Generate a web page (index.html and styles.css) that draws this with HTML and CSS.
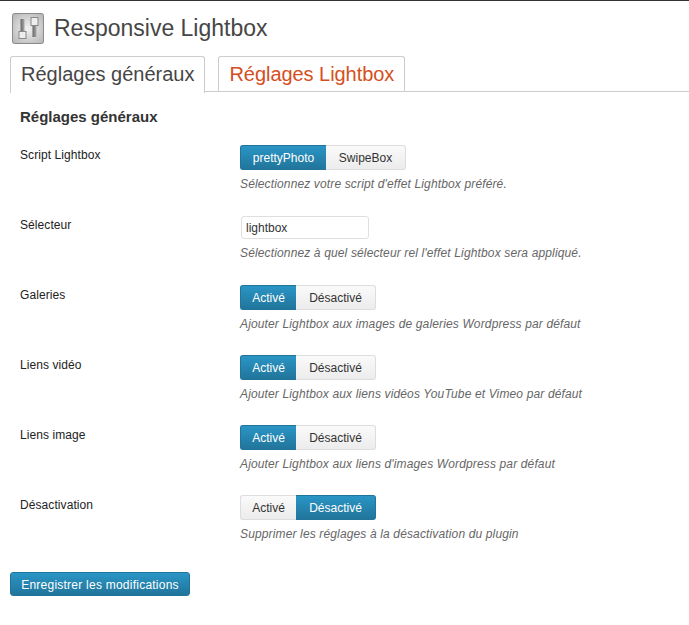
FILE: index.html
```html
<!DOCTYPE html>
<html lang="fr">
<head>
  <meta charset="UTF-8">
  <title>Responsive Lightbox</title>
  <link rel="stylesheet" href="styles.css">
</head>
<body>
  <div class="wrap">
    <div class="page-title">
      <svg class="page-icon" width="32" height="32" viewBox="0 0 32 32">
        <defs>
          <radialGradient id="iconBg" cx="50%" cy="50%" r="65%">
            <stop offset="0" stop-color="#f2f2f2"/>
            <stop offset="1" stop-color="#b8b8b8"/>
          </radialGradient>
          <linearGradient id="iconBar" x1="0" x2="1" y1="0" y2="0">
            <stop offset="0" stop-color="#666"/>
            <stop offset="1" stop-color="#aaa"/>
          </linearGradient>
        </defs>
        <rect x="0.5" y="0.5" width="31" height="30" rx="2" fill="url(#iconBg)" stroke="#8a8a8a"/>
        <rect x="8.5" y="6" width="4" height="18" fill="url(#iconBar)"/>
        <rect x="7" y="18.5" width="7" height="7" fill="#eee" stroke="#888"/>
        <rect x="20.5" y="6" width="4" height="18" fill="url(#iconBar)"/>
        <rect x="19" y="4.5" width="7" height="8" fill="#eee" stroke="#888"/>
      </svg>
      <h2>Responsive Lightbox</h2>
    </div>

    <div class="tabs">
      <a class="tab active">Réglages généraux</a>
      <a class="tab">Réglages Lightbox</a>
    </div>

    <h3>Réglages généraux</h3>

    <div class="row">
      <div class="label">Script Lightbox</div>
      <div class="field">
        <div class="switch">
          <span class="opt long on">prettyPhoto</span><span class="opt">SwipeBox</span>
        </div>
        <p class="desc">Sélectionnez votre script d'effet Lightbox préféré.</p>
      </div>
    </div>

    <div class="row">
      <div class="label">Sélecteur</div>
      <div class="field">
        <input class="text" type="text" value="lightbox">
        <p class="desc">Sélectionnez à quel sélecteur rel l'effet Lightbox sera appliqué.</p>
      </div>
    </div>

    <div class="row">
      <div class="label">Galeries</div>
      <div class="field">
        <div class="switch">
          <span class="opt on">Activé</span><span class="opt">Désactivé</span>
        </div>
        <p class="desc">Ajouter Lightbox aux images de galeries Wordpress par défaut</p>
      </div>
    </div>

    <div class="row">
      <div class="label">Liens vidéo</div>
      <div class="field">
        <div class="switch">
          <span class="opt on">Activé</span><span class="opt">Désactivé</span>
        </div>
        <p class="desc">Ajouter Lightbox aux liens vidéos YouTube et Vimeo par défaut</p>
      </div>
    </div>

    <div class="row">
      <div class="label">Liens image</div>
      <div class="field">
        <div class="switch">
          <span class="opt on">Activé</span><span class="opt">Désactivé</span>
        </div>
        <p class="desc">Ajouter Lightbox aux liens d'images Wordpress par défaut</p>
      </div>
    </div>

    <div class="row">
      <div class="label">Désactivation</div>
      <div class="field">
        <div class="switch">
          <span class="opt">Activé</span><span class="opt on">Désactivé</span>
        </div>
        <p class="desc">Supprimer les réglages à la désactivation du plugin</p>
      </div>
    </div>

    <button class="save">Enregistrer les modifications</button>
  </div>
</body>
</html>
```

FILE: styles.css
```css
body {
  margin: 0;
  background: #fff;
  color: #333;
  font-family: "Liberation Sans", Arial, sans-serif;
  font-size: 12px;
  border-top: 1px solid #333;
  overflow: hidden;
}

.wrap {
  padding: 0 0 0 10px;
}

.page-title {
  display: flex;
  align-items: center;
  height: 37px;
  padding-top: 9px;
  padding-left: 2px;
}

.page-icon {
  margin-right: 10px;
}

h2 {
  margin: 0;
  font-size: 23px;
  font-weight: 400;
  color: #464646;
}

.tabs {
  display: flex;
  gap: 13px;
  height: 35px;
  margin-top: 9px;
  border-bottom: 1px solid #ccc;
}

.tab {
  height: 35px;
  padding: 0 10px;
  border: 1px solid #ccc;
  border-bottom: none;
  border-radius: 3px 3px 0 0;
  font-size: 20px;
  line-height: 34px;
  letter-spacing: -0.05px;
  color: #d54e21;
}

.tab.active {
  height: 36px;
  background: #fff;
  letter-spacing: 0;
  color: #464646;
}

h3 {
  margin: 16px 0 19px 10px;
  font-size: 15px;
  line-height: 18px;
  color: #333;
}

.row {
  display: flex;
  height: 70px;
}

.label {
  width: 220px;
  padding-left: 10px;
  padding-top: 3px;
  line-height: 15px;
  letter-spacing: 0.08px;
  color: #222;
}

.switch {
  display: flex;
}

.opt {
  box-sizing: border-box;
  width: 56px;
  height: 25px;
  border: 1px solid #ddd;
  background: linear-gradient(#fafafa, #ececec);
  line-height: 24px;
  text-align: center;
  color: #333;
}

.opt.long {
  width: 86px;
}

.opt:first-child {
  border-radius: 3px 0 0 3px;
  border-right: none;
}

.opt:last-child {
  width: 80px;
  border-radius: 0 3px 3px 0;
  border-left: none;
}

.opt.on {
  background: linear-gradient(#2a95c5, #21759b);
  border-color: #21759b;
  color: #fff;
}

.text {
  display: block;
  box-sizing: border-box;
  width: 128px;
  height: 23px;
  padding: 0 4px;
  margin-top: 1px;
  margin-left: 1px;
  margin-bottom: 3px;
  border: 1px solid #dfdfdf;
  border-radius: 3px;
  background: #fff;
  font-family: inherit;
  font-size: 12px;
  color: #333;
}

.desc {
  margin: 7px 0 0;
  font-size: 12px;
  line-height: 15px;
  font-style: italic;
  letter-spacing: 0.14px;
  color: #666;
}

.save {
  display: block;
  width: 180px;
  height: 24px;
  margin-top: 7px;
  padding: 1px 0 0;
  border: 1px solid #21759b;
  border-radius: 3px;
  background: linear-gradient(#2a95c5, #21759b);
  font-family: inherit;
  font-size: 12px;
  letter-spacing: 0.24px;
  color: #fff;
}
```
